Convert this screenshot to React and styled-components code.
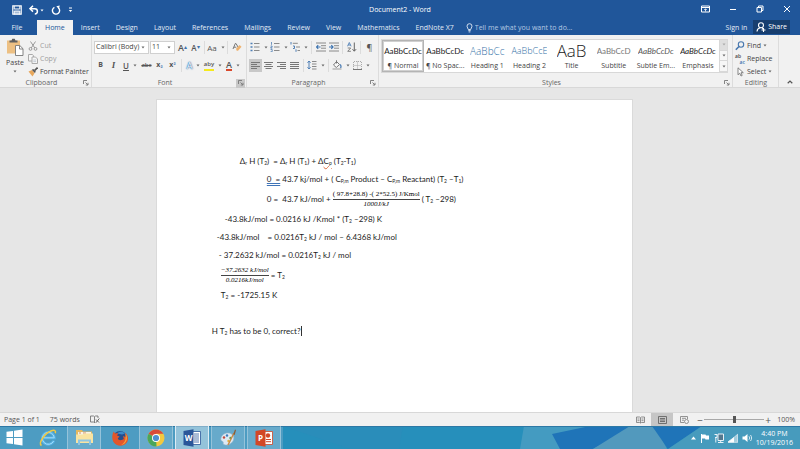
import React from "react";
import styled, { createGlobalStyle, css } from "styled-components";

const blue = "#20569a";
const ui = `"Open Sans", "Noto Sans", sans-serif`;

const GlobalStyle = createGlobalStyle`
  * {
    box-sizing: border-box;
  }
  body {
    margin: 0;
    font-family: ${ui};
    font-size: 7px;
    line-height: 10px;
    color: #444;
    overflow: hidden;
  }
  button, select, input {
    font: inherit;
    color: inherit;
    margin: 0;
    padding: 0;
    border: 0;
    background: none;
  }
  svg {
    display: block;
    flex: none;
  }
`;

/* ---------- drawings ---------- */

const Svg = ({ w = 10, h = 10, box = "0 0 10 10", children }) => (
  <svg
    width={w}
    height={h}
    viewBox={box}
    fill="none"
    stroke="currentColor"
    aria-hidden="true"
  >
    {children}
  </svg>
);

const Caret = ({ color = "#666" }) => (
  <Svg w={4} h={3} box="0 0 4 3">
    <path d="M0.5 0.5h3L2 2.4z" fill={color} stroke="none" />
  </Svg>
);

const SaveIcon = () => (
  <Svg>
    <path d="M0.8 0.8h8.4v8.4H0.8z" strokeWidth="1.2" />
    <path d="M2.2 1v3h5.6V1" />
    <path d="M2.2 9.5V6h5.6v3.5" fill="#fff" fillOpacity="0.6" />
  </Svg>
);

const UndoIcon = () => (
  <Svg>
    <path d="M1.5 3.7h4.3a2.6 2.6 0 0 1 0 5.2" strokeWidth="1.5" />
    <path d="M4 0.8L1 3.7l3 2.9" strokeWidth="1.5" />
  </Svg>
);

const RedoIcon = () => (
  <Svg>
    <path d="M3.4 2.3a3.6 3.6 0 1 0 4 0.5" strokeWidth="1.4" />
    <path d="M8.8 0.5L5.3 1.2l2.5 2.9z" fill="currentColor" stroke="none" />
  </Svg>
);

const QuickIcon = () => (
  <Svg w={5} h={6} box="0 0 5 6">
    <path d="M1 1h3" />
    <path d="M0.8 3h3.4L2.5 5z" fill="currentColor" stroke="none" />
  </Svg>
);

const RibbonOptionsIcon = () => (
  <Svg w={9} h={8} box="0 0 9 8">
    <path d="M0.5 1h8v6h-8zM0.5 2.5h8" />
    <path d="M4.5 6.5V4M3.2 5l1.3-1.3L5.8 5" strokeWidth="0.8" />
  </Svg>
);

const MinimizeIcon = () => (
  <Svg w={8} h={8} box="0 0 8 8">
    <path d="M1 4.5h6" />
  </Svg>
);

const RestoreIcon = () => (
  <Svg w={8} h={8} box="0 0 8 8">
    <path d="M1 2.5h4.5v4.5H1zM2.5 2.5V1H7v4.5H5.5" />
  </Svg>
);

const CloseIcon = () => (
  <Svg w={8} h={8} box="0 0 8 8">
    <path d="M1 1l6 6M7 1L1 7" />
  </Svg>
);

const BulbIcon = () => (
  <Svg w={7} h={10} box="0 0 7 10">
    <path d="M2.3 6.5C2.3 5.3 1 4.8 1 3.2a2.5 2.5 0 0 1 5 0c0 1.6-1.3 2.1-1.3 3.3z" strokeWidth="0.9" />
    <path d="M2.3 7.6h2.4M2.6 8.9h1.8" strokeWidth="0.9" />
  </Svg>
);

const PersonIcon = () => (
  <Svg>
    <circle cx="5" cy="3.2" r="2.5" strokeWidth="1.1" />
    <path d="M1 9.5c0.2-2.2 1.5-3.5 3.4-3.8M5.8 5.7L7 7M5.5 8h4M7.5 6v4" strokeWidth="1.1" />
  </Svg>
);

const PasteIcon = () => (
  <Svg w={18} h={18} box="0 0 18 18">
    <path d="M1 2.5h13v13H1z" fill="#edc083" stroke="none" />
    <path d="M3.5 4.5v-2h2l0.8-1.7h2.4l0.8 1.7h2v2z" fill="#5f5f5f" stroke="none" />
    <path d="M9.5 7.5h4.3L17 10.7v6.8H9.5z" fill="#fff" stroke="#777" strokeWidth="0.9" />
    <path d="M13.5 7.5V11H17" stroke="#777" strokeWidth="0.9" />
  </Svg>
);

const CutIcon = () => (
  <Svg>
    <path d="M2.5 0.5L6.8 7M7.5 0.5L3.2 7" stroke="#999" />
    <circle cx="2.5" cy="7.9" r="1.4" stroke="#999" />
    <circle cx="7.5" cy="7.9" r="1.4" stroke="#999" />
  </Svg>
);

const CopyIcon = () => (
  <Svg>
    <path d="M0.5 0.5h4L5.5 1.8V7h-5z" stroke="#aaa" fill="#f6f6f6" />
    <path d="M4 3h3.5L9.5 5v4.5H4z" stroke="#aaa" fill="#f6f6f6" />
    <path d="M5.3 6h2.8M5.3 7.6h2.8" stroke="#b9c3ce" strokeWidth="0.8" />
  </Svg>
);

const BrushIcon = () => (
  <Svg>
    <path d="M0.5 4.5L4 3l2.5 3.2L4.5 9.5z" fill="#e7a75c" stroke="none" />
    <path d="M3.8 2.8L6.8 6l1-1.3L5.3 2z" fill="#555" stroke="none" />
    <path d="M6.5 3.6L9.5 0.6" stroke="#555" strokeWidth="1.6" />
  </Svg>
);

const EraserIcon = () => (
  <Svg>
    <path d="M1 7L3.3 1.5h0.7L6 5M1.8 5.2h2.5" stroke="#777" />
    <path d="M4 6.8L7.6 3 9.5 4.8 6 8.7H4.7z" fill="#eeb26e" stroke="none" />
  </Svg>
);

const BulletIcon = () => (
  <Svg>
    <path d="M0.5 1.5h2M0.5 5h2M0.5 8.5h2" stroke="#4f7fb5" strokeWidth="1.6" />
    <path d="M4 1.5h5.5M4 5h5.5M4 8.5h5.5" stroke="#8a8a8a" />
  </Svg>
);

const NumberIcon = () => (
  <Svg>
    <path d="M1.5 0v2.8M0.6 4h1.5v1.2H0.8v1h1.5M0.6 7.5h1.6v2.2H0.6" stroke="#4f7fb5" strokeWidth="0.8" />
    <path d="M4 1.5h5.5M4 5h5.5M4 8.5h5.5" stroke="#8a8a8a" />
  </Svg>
);

const MultiIcon = () => (
  <Svg>
    <path d="M1 0v2.5M3 4h1.5v2.5H3M6 7.3v2.5" stroke="#4f7fb5" />
    <path d="M2.8 1.3h5M6 5h4M7.5 8.5H10" stroke="#8a8a8a" />
  </Svg>
);

const IndentIcon = ({ right }) => (
  <Svg>
    <path d="M0 1h10M5 3.7h5M5 6.2h5M0 9h10" stroke="#8a8a8a" />
    <path
      d={right ? "M0 5h4M2.3 3.2L4 5 2.3 6.8" : "M0.5 5h4M2.2 3.2L0.5 5l1.7 1.8"}
      stroke="#3d73b0"
      strokeWidth="1.2"
    />
  </Svg>
);

const SortIcon = () => (
  <Svg>
    <path d="M0.5 4.3L2.3 0.5l1.8 3.8M1.2 3h2.2" stroke="#4f7fb5" strokeWidth="0.9" />
    <path d="M0.7 6h3L0.7 9.3h3.2" stroke="#777" strokeWidth="0.9" />
    <path d="M7.3 0.5v8.6M5.5 7.2l1.8 2 1.8-2" stroke="#666" />
  </Svg>
);

const alignRows = {
  left: "M0 1.5h9M0 3.5h6M0 5.5h9M0 7.5h6",
  center: "M0 1.5h9M1.5 3.5h6M0 5.5h9M1.5 7.5h6",
  right: "M0 1.5h9M3 3.5h6M0 5.5h9M3 7.5h6",
  justify: "M0 1.5h9M0 3.5h9M0 5.5h9M0 7.5h9",
};

const AlignIcon = ({ kind }) => (
  <Svg w={9} h={9} box="0 0 9 9">
    <path d={alignRows[kind]} stroke="#777" />
  </Svg>
);

const SpacingIcon = () => (
  <Svg>
    <path d="M2 1v8M0.5 2.7L2 1l1.5 1.7M0.5 7.3L2 9l1.5-1.7" stroke="#4f7fb5" />
    <path d="M5 1.5h4.5M5 4h4.5M5 6.5h4.5M5 9h4.5" stroke="#8a8a8a" />
  </Svg>
);

const BucketIcon = () => (
  <Svg>
    <path d="M1.5 5L4.5 1.5l3 3L4.3 7.5z" stroke="#777" fill="#fafafa" />
    <path d="M4.5 3.5V0.3" stroke="#777" />
    <path d="M8 4.5c1.3 1 1.3 3 0.3 3.5" stroke="#4f7fb5" strokeWidth="1.3" />
    <path d="M0.5 9h9" stroke="#b5b5b5" strokeWidth="1.4" />
  </Svg>
);

const BorderIcon = () => (
  <Svg w={9} h={9} box="0 0 9 9">
    <path d="M0.5 8V0.5h8V8M4.5 0.5V8M0.5 4.5h8" stroke="#aaa" strokeDasharray="1 1" />
    <path d="M0 8.5h9" stroke="#777" />
  </Svg>
);

const LauncherIcon = () => (
  <Svg w={6} h={6} box="0 0 6 6">
    <path d="M0.5 4V0.5H4M2.5 2.5l2.3 2.3M5 2.8V5H2.8" stroke="#777" strokeWidth="0.9" />
  </Svg>
);

const FindIcon = () => (
  <Svg>
    <circle cx="6" cy="3.5" r="2.7" stroke="#4777ae" strokeWidth="1.1" />
    <path d="M4 5.5L0.8 8.8" stroke="#4777ae" strokeWidth="1.6" />
  </Svg>
);

const SelectIcon = () => (
  <Svg>
    <path d="M3 0.8v7l1.7-1.6L6 9l1.2-0.6L6 5.7h2.3z" stroke="#777" strokeWidth="0.9" fill="#fff" />
  </Svg>
);

const ChevronUp = () => (
  <Svg w={6} h={4} box="0 0 6 4">
    <path d="M0.7 3.2L3 1l2.3 2.2" stroke="#555" strokeWidth="1.2" />
  </Svg>
);

const ProofIcon = () => (
  <Svg w={10} h={9} box="0 0 10 9">
    <path d="M4.5 7.5L3.5 7H0.5V1h3l1 0.7 1-0.7H8V3M4.5 1.7V8" stroke="#777" strokeWidth="0.9" />
    <path d="M5.8 7.8L9.3 3.5M6 4.5l3 3" stroke="#666" />
  </Svg>
);

const ReadIcon = () => (
  <Svg w={9} h={8} box="0 0 9 8">
    <path d="M4.5 7L3.5 6.5h-3V1h3l1 0.7 1-0.7h3v5.5h-3zM4.5 1.7V7M1.5 3h2M1.5 4.7h2M5.5 3h2M5.5 4.7h2" stroke="#777" strokeWidth="0.8" />
  </Svg>
);

const PrintIcon = () => (
  <Svg w={9} h={8} box="0 0 9 8">
    <path d="M0.5 0.5h8v7h-8zM2 2.5h5M2 4h5M2 5.5h5" stroke="#666" strokeWidth="0.9" />
  </Svg>
);

const WebIcon = () => (
  <Svg w={9} h={8} box="0 0 9 8">
    <path d="M4 6.5H0.5v-6h7V3M2 2.3h4M2 4.2h2" stroke="#888" strokeWidth="0.9" />
    <circle cx="6.5" cy="5.5" r="2" stroke="#888" strokeWidth="0.9" />
  </Svg>
);

const StartLogo = () => (
  <Svg w={17} h={17} box="0 0 17 17">
    <path d="M0.5 2.8l6.5-0.9v6.2H0.5zM8 1.7l8.5-1.2v7.6H8zM0.5 9H7v6.1l-6.5-0.9zM8 9h8.5v7.5L8 15.3z" fill="#fff" stroke="none" />
  </Svg>
);

const ExplorerE = () => (
  <Svg w={18} h={18} box="0 0 18 18">
    <path d="M14.8 11.8a6 6 0 1 1 0.5-3H5" stroke="#55b3e8" strokeWidth="2.8" />
    <path d="M14.8 11.8a6 6 0 1 1 0.5-3H5" stroke="#a6dcf6" strokeWidth="1" />
    <path d="M2.5 16.5C-1.5 14.5 6 4 12.5 1.8c3.5-1.2 4.5 0.2 3.8 2.4" stroke="#f0c943" strokeWidth="1.5" />
  </Svg>
);

const FolderIcon = () => (
  <Svg w={19} h={17} box="0 0 19 17">
    <path d="M1 1h6l1 1.5h9V12H1z" fill="#e5b85f" stroke="none" />
    <path d="M3 3h13v4H3z" fill="#f7f3e4" stroke="none" />
    <path d="M4 4h2M8 4h3" stroke="#d98c6c" />
    <path d="M1 5.5h7l1-1h9V14H1z" fill="#f9e3a1" stroke="none" />
    <path d="M4 16v-4.5h11V16" stroke="#8fc5e3" strokeWidth="2" />
  </Svg>
);

const FirefoxIcon = () => (
  <Svg w={18} h={18} box="0 0 18 18">
    <circle cx="9" cy="9" r="7" fill="#254f8f" stroke="none" />
    <path d="M6 4.5c2-2.5 6-2.5 8 0l-3 1z" fill="#3c8bc9" stroke="none" />
    <path d="M2.6 2.5l1.6 2c1-0.5 2-0.5 3 0L6 6.6l2.6 1-1.8 1.6c0.5 2.6 4 2.3 6 0.8L12 7l2.6 1c0.4-1.6 0-3-1-4.5 3.4 2 4.4 6 2.6 9.5C13.5 17.7 5.5 18 2.5 13 0.6 9.7 1 5.5 2.6 2.5z" fill="#e2562b" stroke="none" />
    <path d="M14.5 4.5c3.2 4.5 1 10.5-4.3 11.5 3-2 4.5-4 4.4-8z" fill="#f2a33a" stroke="none" />
  </Svg>
);

const ChromeIcon = () => (
  <Svg w={18} h={18} box="0 0 18 18">
    <circle cx="9" cy="9" r="8.5" fill="#f3c93f" stroke="none" />
    <path d="M9 9L1.64 4.75A8.5 8.5 0 0 1 16.36 4.75H9z" fill="#d94a3a" stroke="none" />
    <path d="M9 9l0.5 8.48A8.5 8.5 0 0 1 1.64 4.75z" fill="#4aa65a" stroke="none" />
    <circle cx="9" cy="9" r="4" fill="#fff" stroke="none" />
    <circle cx="9" cy="9" r="3.1" fill="#4f8fd0" stroke="none" />
  </Svg>
);

const PaletteIcon = () => (
  <Svg w={19} h={18} box="0 0 19 18">
    <path d="M2 9c1-4 6-6 9.5-4.5s4 4.5 2.5 7.5-6 5-9 3.5c-1.5-0.8 0-2.5-1.3-3S1.5 11 2 9z" fill="#dce9f3" stroke="#9ab6cb" strokeWidth="0.6" />
    <circle cx="5" cy="8.5" r="1.2" fill="#c2493c" stroke="none" />
    <circle cx="8" cy="6.5" r="1.2" fill="#3a7cc0" stroke="none" />
    <circle cx="11.5" cy="9" r="1.2" fill="#55a24f" stroke="none" />
    <circle cx="9.5" cy="12" r="1.2" fill="#e0b13e" stroke="none" />
    <path d="M9 16L15 4" stroke="#c78b4b" strokeWidth="1.5" />
    <path d="M14.3 5.3L16 0.5l1 0.5-1.3 5z" fill="#8c5c33" stroke="none" />
  </Svg>
);

const TrayArrow = () => (
  <Svg w={5} h={4} box="0 0 5 4">
    <path d="M0 3.5h5L2.5 0.5z" fill="#fff" stroke="none" />
  </Svg>
);

const FlagIcon = () => (
  <Svg>
    <path d="M1.5 1v9" stroke="#fff" />
    <path d="M2 1.5h3.5l0.5 1H9v4H5.5l-0.5-1H2z" fill="#fff" stroke="none" />
  </Svg>
);

const PlugIcon = () => (
  <Svg>
    <path d="M4 1h5.5v6.5H4z" stroke="#e8f1f7" fill="#54788f" />
    <path d="M6.7 8v1.5M4 9.5h5.5M0.5 1.5h2.5v3h-2M1.8 4.5v5" stroke="#e8f1f7" />
  </Svg>
);

const SignalIcon = () => (
  <Svg>
    <path d="M0 9.5h10V1z" fill="#fff" fillOpacity="0.5" stroke="none" />
    <path d="M0 9.5V8.5l6-4.5v5.5z" fill="#fff" stroke="none" />
    <path d="M0.3 9.3h9.4V1.2z" stroke="#e4eef4" strokeWidth="0.7" />
  </Svg>
);

const VolumeIcon = () => (
  <Svg>
    <path d="M0.5 3.5h2L5.5 1v8L2.5 6.5h-2z" fill="#fff" stroke="none" />
    <path d="M7 3.3c0.8 1 0.8 2.4 0 3.4M8.5 2c1.4 1.8 1.4 4.2 0 6" stroke="#fff" strokeWidth="0.8" />
  </Svg>
);

const OfficeIcon = ({ color, letter, chart }) => (
  <svg width="18" height="18" viewBox="0 0 18 18" aria-hidden="true">
    <path d="M9 2.5h8.5v13H9z" fill="#fff" stroke={color} strokeWidth="0.8" />
    {chart ? (
      <>
        <circle cx="13" cy="6.5" r="2.2" fill={color} />
        <path d="M11 10.5h5M11 12.7h5" stroke={color} />
      </>
    ) : (
      <path d="M11 5h5M11 7h5M11 9h5M11 11h5M11 13h5" stroke={color} strokeWidth="0.8" />
    )}
    <path d="M0.5 2L10.5 0.3v17.4L0.5 16z" fill={color} />
    <text x="5.5" y="12" textAnchor="middle" fill="#fff" fontSize="8" fontWeight="700" fontFamily="Open Sans">
      {letter}
    </text>
  </svg>
);

/* ---------- window ---------- */

const Window = styled.div`
  display: flex;
  flex-direction: column;
  min-height: 100vh;
  background: #e6e6e6;
`;

const TitleBar = styled.header`
  display: grid;
  grid-template-columns: 1fr auto 1fr;
  align-items: center;
  height: 20px;
  color: #fff;
  background: ${blue};
`;

const QuickBar = styled.div`
  display: flex;
  align-items: center;
  gap: 7px;
  padding-left: 12px;
`;

const WindowButtons = styled.div`
  display: flex;
  justify-content: flex-end;
  gap: 19px;
  padding: 0 9px 2px 0;
`;

const BarButton = styled.button`
  display: flex;
  align-items: center;
  gap: 1px;
`;

const TabBar = styled.nav`
  display: flex;
  align-items: stretch;
  height: 15px;
  padding-right: 10px;
  color: #e3ebf5;
  background: ${blue};
`;

const Tab = styled.button`
  padding: 0 8px;
  line-height: 14px;
  color: ${(p) => (p.$active ? blue : "#e3ebf5")};
  background: ${(p) => (p.$active ? "#f1f1f1" : "transparent")};
  ${(p) => p.$first && "width: 37px; padding: 0 3px 0 0;"}
`;

const TellMe = styled.label`
  display: flex;
  flex: 1;
  align-items: center;
  gap: 2px;
  padding-left: 4px;
  input {
    width: 120px;
    outline: none;
  }
  input::placeholder {
    color: #b4c8e2;
    opacity: 1;
  }
`;

const SignIn = styled.a`
  align-self: center;
  margin-right: 6px;
  color: #e3ebf5;
  text-decoration: none;
`;

const Share = styled.button`
  display: flex;
  align-items: center;
  gap: 2px;
  height: 14px;
  padding: 0 3px;
  color: #fff;
  background: #173e6f;
`;

/* ---------- ribbon ---------- */

const Ribbon = styled.section`
  display: flex;
  height: 53px;
  background: #f1f1f1;
  border-bottom: 1px solid #d8d8d8;
`;

const Group = styled.div`
  display: flex;
  flex-direction: column;
  flex: ${(p) => (p.$w ? `0 0 ${p.$w}px` : "1 1 0")};
  min-width: 0;
  padding: 3px 1px 0 2px;
  border-right: 1px solid #dcdcdc;
`;

const GroupBody = styled.div`
  display: flex;
  flex: 1;
  min-height: 0;
  min-width: 0;
`;

const GroupFoot = styled.div`
  display: grid;
  grid-template-columns: ${(p) => (p.$plain ? "1fr" : "1fr 9px")};
  align-items: center;
  height: 9px;
  text-align: center;
  color: #666;
`;

const Launcher = styled.button`
  display: grid;
  place-items: center;
  height: 9px;
  background: ${(p) => (p.$on ? "#c8c8c8" : "none")};
`;

const PasteButton = styled.button`
  display: flex;
  flex-direction: column;
  align-items: center;
  width: 26px;
  gap: 2px;
`;

const CommandList = styled.div`
  display: flex;
  flex-direction: column;
  padding-top: 1px;
`;

const Command = styled.button`
  display: flex;
  align-items: center;
  gap: 2px;
  height: 13px;
  color: ${(p) => (p.$off ? "#a0a0a0" : "#444")};
  white-space: nowrap;
`;

const ReplaceMark = styled.span`
  display: flex;
  flex-direction: column;
  width: 10px;
  font-size: 5px;
  font-weight: 600;
  line-height: 6px;
  text-align: left;
  span:last-child {
    text-align: right;
    color: #3d73b0;
  }
`;

const Rows = styled.div`
  display: flex;
  flex-direction: column;
  flex: 1;
`;

const ToolRow = styled.div`
  display: flex;
  align-items: center;
  height: 18px;
`;

const Tool = styled.button`
  display: flex;
  align-items: center;
  justify-content: center;
  gap: ${(p) => (p.$menu ? "4px" : "0")};
  width: ${(p) => p.$w || 13}px;
  height: 13px;
  color: #555;
  white-space: nowrap;
  background: ${(p) => (p.$on ? "#c8c8c8" : "none")};
  ${(p) => p.$bold && "font-weight: 700;"}
  ${(p) => p.$italic && "font-style: italic; font-family: 'Liberation Serif', serif; font-weight: 700; font-size: 9px;"}
  sub,
  sup {
    font-size: 6px;
    line-height: 0;
    color: #3d73b0;
  }
`;

const Divider = styled.span`
  width: 1px;
  height: 13px;
  margin: 0 2px;
  background: #dcdcdc;
`;

const Picker = styled.div`
  display: flex;
  align-items: center;
  width: ${(p) => p.$w}px;
  height: 13px;
  padding: 0 3px 0 1px;
  margin-right: 1px;
  background: #fff;
  border: 1px solid #d0d0d0;
  select {
    flex: 1;
    min-width: 0;
    appearance: none;
    outline: none;
  }
`;

const Letter = styled.span`
  font-size: ${(p) => p.$size || 8}px;
  font-weight: ${(p) => (p.$strong ? 600 : 400)};
  line-height: 9px;
  ${(p) => p.$line && css`text-decoration: ${p.$line};`}
  ${(p) => p.$bar && css`border-bottom: 2px solid ${p.$bar};`}
  ${(p) => p.$glow && css`color: #fff; text-shadow: 0 0 1px #2f71b3, 0 0 1px #2f71b3, 0 0 2px #2f71b3;`}
`;

const Gallery = styled.div`
  display: grid;
  grid-template-columns: repeat(8, 1fr) 8px;
  flex: 1;
  min-width: 0;
  height: 34px;
  margin: 1px 3px 0 0;
  background: #fff;
  border: 1px solid #d8d8d8;
`;

const StyleTile = styled.button`
  display: flex;
  flex-direction: column;
  align-items: center;
  min-width: 0;
  overflow: hidden;
  border: ${(p) => (p.$on ? "1px solid #b4b4b4" : "1px solid transparent")};
  outline: ${(p) => (p.$on ? "1px solid #d0d0d0" : "none")};
  outline-offset: -2px;
`;

const Sample = styled.span`
  max-width: 38px;
  height: 20px;
  overflow: hidden;
  line-height: 20px;
  white-space: nowrap;
  font-family: ${(p) => (p.$light ? ui : `Lato, sans-serif`)};
  font-size: ${(p) => p.$size || 8}px;
  font-weight: ${(p) => (p.$light ? 300 : 400)};
  color: ${(p) => p.$color || "#222"};
  ${(p) => p.$italic && "font-style: italic;"}
`;

const Scroller = styled.div`
  display: grid;
  grid-template-rows: repeat(3, 1fr);
  border-left: 1px solid #d8d8d8;
  button {
    display: grid;
    place-items: center;
    background: #f6f6f6;
    border-bottom: 1px solid #d8d8d8;
  }
  button:first-child {
    background: #dedede;
  }
`;

const Collapse = styled.button`
  display: flex;
  align-items: flex-end;
  justify-content: center;
  width: 21px;
  padding-bottom: 3px;
`;

/* ---------- document ---------- */

const Desk = styled.main`
  display: flex;
  justify-content: center;
  flex: 1;
  padding: 11px 11px 0 0;
`;

const Page = styled.article`
  width: 60.5%;
  padding: 52px 0 0 55px;
  font-family: Lato, sans-serif;
  font-size: 8px;
  color: #1c1c1c;
  white-space: pre;
  background: #fff;
  border: 1px solid #dadada;
  border-bottom: 0;
`;

const Line = styled.p`
  display: flex;
  align-items: center;
  height: ${(p) => (p.$tall ? 22 : 18)}px;
  margin: 0;
  padding-left: ${(p) => p.$indent || 0}px;
  sub {
    font-size: 5px;
    line-height: 0;
    vertical-align: -1px;
  }
`;

const Fraction = styled.span`
  display: inline-flex;
  flex-direction: column;
  align-items: center;
  font: ${(p) => (p.$upright ? "normal" : "italic")} 7px/9px "Liberation Serif", serif;
  color: #000;
  span:first-child {
    border-bottom: 1px solid #444;
  }
  i {
    font-style: italic;
  }
`;

const Marked = styled.span`
  text-decoration: underline ${(p) => p.$kind} ${(p) => p.$color} 1px;
`;

const Cursor = styled.span`
  width: 1px;
  height: 10px;
  background: #333;
`;

/* ---------- status bar ---------- */

const StatusBar = styled.footer`
  display: flex;
  align-items: center;
  gap: 10px;
  height: 14px;
  padding: 0 5px 0 4px;
  color: #555;
  background: #f1f1f1;
  border-top: 1px solid #d8d8d8;
`;

const Views = styled.div`
  display: flex;
  margin-right: 1px;
`;

const ViewButton = styled.button`
  display: grid;
  place-items: center;
  width: 22px;
  height: 13px;
  background: ${(p) => (p.$on ? "#c6c6c6" : "none")};
`;

const Zoom = styled.div`
  display: flex;
  align-items: center;
  gap: 1px;
  margin-left: auto;
`;

const Step = styled.button`
  width: 6px;
  font-size: 10px;
`;

const Percent = styled.output`
  padding-left: 5px;
`;

const Range = styled.input`
  width: 60px;
  height: 9px;
  appearance: none;
  background: linear-gradient(#a8a8a8, #a8a8a8) center / 100% 1px no-repeat;
  &::-webkit-slider-thumb {
    appearance: none;
    width: 3px;
    height: 7px;
    background: #555;
  }
`;

/* ---------- taskbar ---------- */

const Taskbar = styled.nav`
  position: relative;
  display: flex;
  height: 23px;
  color: #fff;
  background: #268fbb;
`;

const Wallpaper = styled.svg`
  position: absolute;
  inset: 0;
  width: 100%;
  height: 100%;
`;

const TaskButton = styled.button`
  position: relative;
  display: grid;
  place-items: center;
  width: ${(p) => p.$w || 34}px;
  margin-right: 2px;
  border: 1px solid transparent;
  border-width: 0 1px;
  ${(p) =>
    p.$open &&
    css`
      background: rgba(255, 255, 255, 0.15);
      border-color: rgba(255, 255, 255, 0.3);
    `}
  ${(p) =>
    p.$front &&
    css`
      background: rgba(255, 255, 255, 0.4);
      border-color: #dcecf5;
    `}
`;

const Tray = styled.div`
  position: relative;
  display: flex;
  align-items: center;
  gap: 4px;
  margin-left: auto;
  padding-right: 7px;
`;

const Clock = styled.div`
  line-height: 9px;
  text-align: center;
`;

const tabs = ["Insert", "Design", "Layout", "References", "Mailings", "Review", "View", "Mathematics", "EndNote X7"];

const styleTiles = [
  { name: "¶ Normal", text: "AaBbCcDc", on: true },
  { name: "¶ No Spac...", text: "AaBbCcDc" },
  { name: "Heading 1", text: "AaBbCc", color: "#3572a8", size: 10, light: true },
  { name: "Heading 2", text: "AaBbCcE", color: "#3572a8", size: 9, light: true },
  { name: "Title", text: "AaB", size: 17, light: true },
  { name: "Subtitle", text: "AaBbCcD", color: "#777" },
  { name: "Subtle Em...", text: "AaBbCcDc", color: "#555", italic: true },
  { name: "Emphasis", text: "AaBbCcDc", italic: true },
];

const Foot = ({ children, on, plain }) => (
  <GroupFoot $plain={plain}>
    <span>{children}</span>
    {!plain && (
      <Launcher $on={on} aria-label={`${children} settings`}>
        <LauncherIcon />
      </Launcher>
    )}
  </GroupFoot>
);

const App = () => {
  return (
    <Window>
      <GlobalStyle />
      <TitleBar>
        <QuickBar>
          <BarButton aria-label="Save"><SaveIcon /></BarButton>
          <BarButton aria-label="Undo"><UndoIcon /><Caret color="#fff" /></BarButton>
          <BarButton aria-label="Redo"><RedoIcon /></BarButton>
          <BarButton aria-label="Customize"><QuickIcon /></BarButton>
        </QuickBar>
        <span>Document2 - Word</span>
        <WindowButtons>
          <BarButton aria-label="Ribbon options"><RibbonOptionsIcon /></BarButton>
          <BarButton aria-label="Minimize"><MinimizeIcon /></BarButton>
          <BarButton aria-label="Restore"><RestoreIcon /></BarButton>
          <BarButton aria-label="Close"><CloseIcon /></BarButton>
        </WindowButtons>
      </TitleBar>

      <TabBar>
        <Tab $first>File</Tab>
        <Tab $active>Home</Tab>
        {tabs.map((name) => (
          <Tab key={name}>{name}</Tab>
        ))}
        <TellMe>
          <BulbIcon />
          <input aria-label="Tell me" placeholder="Tell me what you want to do..." />
        </TellMe>
        <SignIn href="#signin">Sign in</SignIn>
        <Share><PersonIcon /> Share</Share>
      </TabBar>

      <Ribbon>
        <Group $w={92}>
          <GroupBody>
            <PasteButton>
              <PasteIcon />
              Paste
              <Caret />
            </PasteButton>
            <CommandList>
              <Command $off><CutIcon />Cut</Command>
              <Command $off><CopyIcon />Copy</Command>
              <Command><BrushIcon />Format Painter</Command>
            </CommandList>
          </GroupBody>
          <Foot>Clipboard</Foot>
        </Group>

        <Group $w={155}>
          <GroupBody>
            <Rows>
              <ToolRow>
                <Picker $w={55}>
                  <select aria-label="Font"><option>Calibri (Body)</option></select>
                  <Caret />
                </Picker>
                <Picker $w={25}>
                  <select aria-label="Font size"><option>11</option></select>
                  <Caret />
                </Picker>
                <Tool aria-label="Grow font"><Letter $size={9} $strong>A</Letter><sup>▴</sup></Tool>
                <Tool aria-label="Shrink font"><Letter $strong>A</Letter><sup>▾</sup></Tool>
                <Divider />
                <Tool $w={18} $menu aria-label="Change case"><Letter>Aa</Letter><Caret /></Tool>
                <Divider />
                <Tool aria-label="Clear formatting"><EraserIcon /></Tool>
              </ToolRow>
              <ToolRow>
                <Tool $bold>B</Tool>
                <Tool $italic>I</Tool>
                <Tool $w={20} $menu aria-label="Underline"><Letter $strong $line="underline">U</Letter><Caret /></Tool>
                <Tool aria-label="Strikethrough"><Letter $size={6} $strong $line="line-through">abc</Letter></Tool>
                <Tool $bold aria-label="Subscript">x<sub>₂</sub></Tool>
                <Tool $bold aria-label="Superscript">x<sup>²</sup></Tool>
                <Divider />
                <Tool $w={19} $menu aria-label="Text effects"><Letter $size={9} $glow>A</Letter><Caret /></Tool>
                <Tool $w={20} $menu aria-label="Highlight"><Letter $size={6} $strong $bar="#f5ea1c">aby</Letter><Caret /></Tool>
                <Tool $w={20} $menu aria-label="Font color"><Letter $size={9} $strong $bar="#d9482b">A</Letter><Caret /></Tool>
              </ToolRow>
            </Rows>
          </GroupBody>
          <Foot on>Font</Foot>
        </Group>

        <Group $w={132}>
          <GroupBody>
            <Rows>
              <ToolRow>
                <Tool $w={20} $menu aria-label="Bullets"><BulletIcon /><Caret /></Tool>
                <Tool $w={20} $menu aria-label="Numbering"><NumberIcon /><Caret /></Tool>
                <Tool $w={20} $menu aria-label="Multilevel list"><MultiIcon /><Caret /></Tool>
                <Divider />
                <Tool aria-label="Decrease indent"><IndentIcon /></Tool>
                <Tool aria-label="Increase indent"><IndentIcon right /></Tool>
                <Divider />
                <Tool aria-label="Sort"><SortIcon /></Tool>
                <Divider />
                <Tool aria-label="Show marks"><Letter $size={9}>¶</Letter></Tool>
              </ToolRow>
              <ToolRow>
                <Tool $on aria-label="Align left"><AlignIcon kind="left" /></Tool>
                <Tool aria-label="Center"><AlignIcon kind="center" /></Tool>
                <Tool aria-label="Align right"><AlignIcon kind="right" /></Tool>
                <Tool aria-label="Justify"><AlignIcon kind="justify" /></Tool>
                <Divider />
                <Tool $w={20} $menu aria-label="Line spacing"><SpacingIcon /><Caret /></Tool>
                <Divider />
                <Tool $w={20} $menu aria-label="Shading"><BucketIcon /><Caret /></Tool>
                <Tool $w={20} $menu aria-label="Borders"><BorderIcon /><Caret /></Tool>
              </ToolRow>
            </Rows>
          </GroupBody>
          <Foot>Paragraph</Foot>
        </Group>

        <Group>
          <GroupBody>
            <Gallery>
              {styleTiles.map((tile) => (
                <StyleTile key={tile.name} $on={tile.on}>
                  <Sample $color={tile.color} $size={tile.size} $light={tile.light} $italic={tile.italic}>
                    {tile.text}
                  </Sample>
                  {tile.name}
                </StyleTile>
              ))}
              <Scroller>
                <button aria-label="Scroll up"><Caret color="#aaa" /></button>
                <button aria-label="Scroll down"><Caret /></button>
                <button aria-label="More styles"><Caret /></button>
              </Scroller>
            </Gallery>
          </GroupBody>
          <Foot>Styles</Foot>
        </Group>

        <Group $w={46}>
          <GroupBody>
            <CommandList>
              <Command><FindIcon />Find <Caret /></Command>
              <Command>
                <ReplaceMark aria-hidden="true">
                  <span>ab</span>
                  <span>ac</span>
                </ReplaceMark>
                Replace
              </Command>
              <Command><SelectIcon />Select<Caret /></Command>
            </CommandList>
          </GroupBody>
          <Foot plain>Editing</Foot>
        </Group>
        <Collapse aria-label="Collapse ribbon"><ChevronUp /></Collapse>
      </Ribbon>

      <Desk>
        <Page>
          <Line $indent={28}>
            <span>
              Δ<sub>r</sub> H (T<sub>2</sub>)  = Δ<sub>r</sub> H (T<sub>1</sub>) + Δ
              <Marked $kind="wavy" $color="#dd6b3c">C<sub>p</sub></Marked> (T<sub>2</sub>-T<sub>1</sub>)
            </span>
          </Line>
          <Line $indent={55}>
            <span>
              <Marked $kind="double" $color="#3f74b8">0  =</Marked> 43.7 kj/mol + ( C<sub>P,m</sub> Product – C<sub>P,m</sub> Reactant) (T<sub>2</sub> –T<sub>1</sub>)
            </span>
          </Line>
          <Line $tall $indent={55}>
            <span>0 =  43.7 kJ/mol + </span>
            <Fraction $upright>
              <span>( 97.8+28.8) -( 2*52.5) J/Kmol</span>
              <i>1000J/kJ</i>
            </Fraction>
            <span> ( T<sub>2</sub> –298)</span>
          </Line>
          <Line $indent={13}>
            <span>-43.8kJ/mol = 0.0216 kJ /Kmol * (T<sub>2</sub> –298) K</span>
          </Line>
          <Line $indent={5}>
            <span>-43.8kJ/mol    = 0.0216T<sub>2</sub> kJ / mol – 6.4368 kJ/mol</span>
          </Line>
          <Line $indent={7}>
            <span>- 37.2632 kJ/mol = 0.0216T<sub>2</sub> kJ / mol</span>
          </Line>
          <Line $tall $indent={9}>
            <Fraction>
              <span>−37.2632 kJ/mol</span>
              <span>0.0216kJ/mol</span>
            </Fraction>
            <span> = T<sub>2</sub></span>
          </Line>
          <Line $indent={9}>
            <span>T<sub>2</sub> = -1725.15 K</span>
          </Line>
          <Line />
          <Line>
            <span>H T<sub>2</sub> has to be 0, correct?</span>
            <Cursor />
          </Line>
        </Page>
      </Desk>

      <StatusBar>
        <span>Page 1 of 1</span>
        <span>75 words</span>
        <ProofIcon />
        <Zoom>
          <Views>
            <ViewButton aria-label="Read mode"><ReadIcon /></ViewButton>
            <ViewButton $on aria-label="Print layout"><PrintIcon /></ViewButton>
            <ViewButton aria-label="Web layout"><WebIcon /></ViewButton>
          </Views>
          <Step aria-label="Zoom out">−</Step>
          <Range type="range" min="10" max="190" defaultValue="100" aria-label="Zoom" />
          <Step aria-label="Zoom in">+</Step>
          <Percent>100%</Percent>
        </Zoom>
      </StatusBar>

      <Taskbar>
        <Wallpaper viewBox="0 0 800 23" preserveAspectRatio="none" aria-hidden="true">
          <path d="M0 0h283v23H0z" fill="#4d9cc2" />
          <path d="M283 0h120l-4 23H350z" fill="#2a8dba" />
          <path d="M524 0h138l-60 23h-82z" fill="#449bc1" />
          <path d="M552 8L590 0h48l-45 23H560z" fill="#1f74b8" />
          <path d="M630 0h25l12 23h-74z" fill="#5299bd" />
          <path d="M652 0h50l-34 23z" fill="#1f74b8" />
          <path d="M702 0h98v23H668z" fill="#479bbd" />
          <path d="M0 0.5h800" stroke="#2d78a5" />
        </Wallpaper>
        <TaskButton $w={29} aria-label="Start"><StartLogo /></TaskButton>
        <TaskButton aria-label="Internet Explorer"><ExplorerE /></TaskButton>
        <TaskButton $open aria-label="File Explorer"><FolderIcon /></TaskButton>
        <TaskButton aria-label="Firefox"><FirefoxIcon /></TaskButton>
        <TaskButton $open aria-label="Chrome"><ChromeIcon /></TaskButton>
        <TaskButton $front aria-label="Word"><OfficeIcon color="#2a5699" letter="W" /></TaskButton>
        <TaskButton $open aria-label="Paint"><PaletteIcon /></TaskButton>
        <TaskButton $open aria-label="PowerPoint"><OfficeIcon color="#d24726" letter="P" chart /></TaskButton>
        <Tray>
          <TrayArrow />
          <FlagIcon />
          <PlugIcon />
          <SignalIcon />
          <VolumeIcon />
          <Clock>
            4:40 PM
            <br />
            10/19/2016
          </Clock>
        </Tray>
      </Taskbar>
    </Window>
  );
};

export default App;
